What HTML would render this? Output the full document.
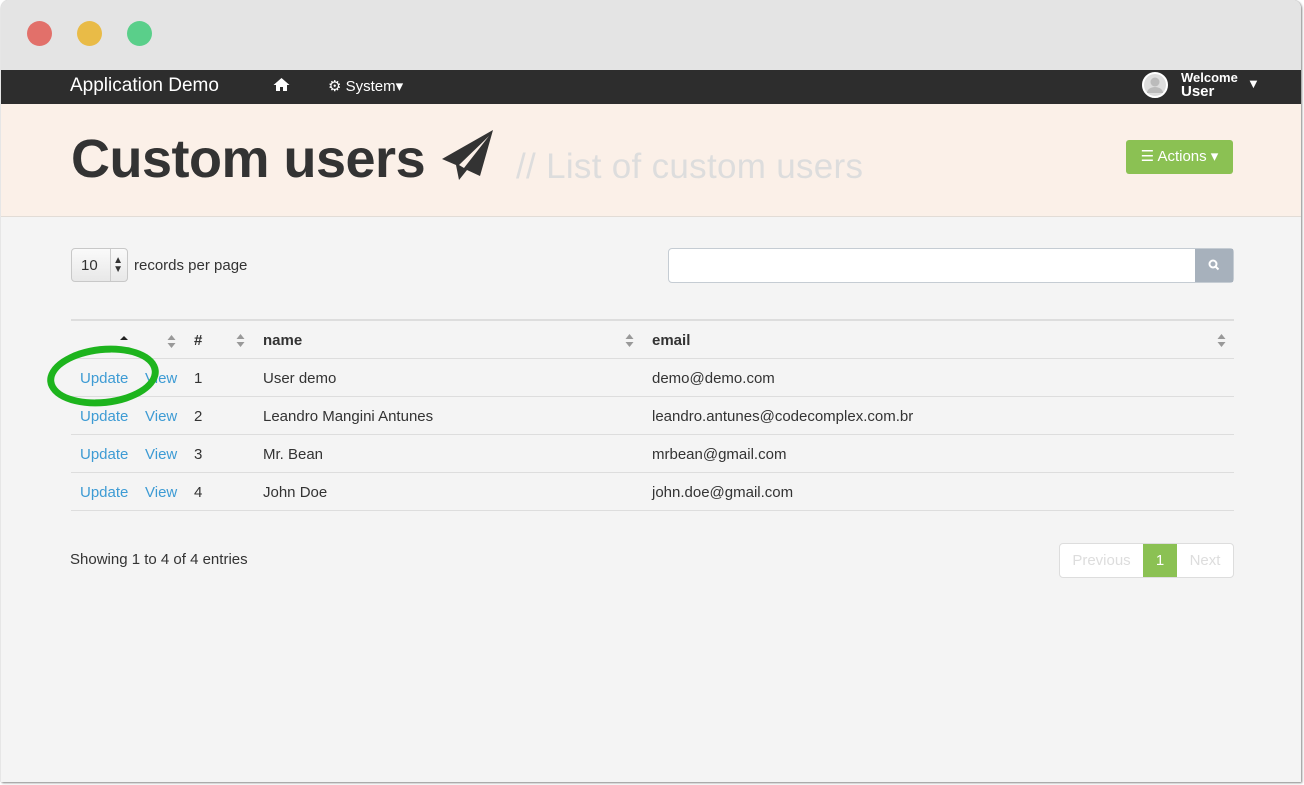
<!DOCTYPE html>
<html><head><meta charset="utf-8"><style>
*{box-sizing:border-box;margin:0;padding:0}
body{width:1304px;height:785px;background:#fff;font-family:"Liberation Sans",sans-serif;overflow:hidden;position:relative}
.win{position:absolute;left:1px;top:0;width:1300px;height:782px;background:#f4f4f4;border-radius:8px 8px 0 0;overflow:hidden;box-shadow:1px 1px 2px #888, 0 0 1px #999}
.title{height:70px;background:#e4e4e4;position:relative}
.dot{position:absolute;top:21px;width:25px;height:25px;border-radius:50%}
.nav{position:absolute;top:70px;left:0;width:1300px;height:34px;background:#2d2d2d;color:#fff}
.nav span{position:absolute;top:7px}
.head{position:absolute;top:104px;left:0;width:1300px;height:113px;background:#fbf0e8;border-bottom:1px solid #e2dcd6}
.t{position:absolute;left:70px;top:24px;font-size:54px;font-weight:bold;color:#333;letter-spacing:-0.5px}
.sub{position:absolute;left:515px;top:43px;font-size:35px;color:#ddd;letter-spacing:0.3px}
.btn{position:absolute;left:1125px;top:36px;width:107px;height:34px;background:#8bc153;border-radius:3px;color:#fff;font-size:15px;line-height:34px;text-align:center}
.sel{position:absolute;left:70px;top:248px;width:57px;height:34px;border:1px solid #c8c8c8;border-radius:4px;background:linear-gradient(#fafafa,#e8e8e8);font-size:15px;color:#333;padding:8px 0 0 9px}
.lbl{position:absolute;left:133px;top:257px;font-size:15px;color:#333}
.search{position:absolute;left:667px;top:248px;width:566px;height:35px;border:1px solid #c5ccd3;border-radius:4px;background:#fff}
.sb{position:absolute;right:0;top:0;width:38px;height:33px;background:#a7b1bc}
table{position:absolute;left:70px;top:319px;width:1163px;border-collapse:collapse;font-size:15px;color:#333}
td,th{height:38px;border-top:1px solid #ddd;text-align:left;vertical-align:middle;padding-top:2px}
thead th{border-top:2px solid #ddd;font-weight:bold}
tbody tr:last-child td{border-bottom:1px solid #ddd}
a{color:#3d9bd4;text-decoration:none}
.srt{float:right;margin-right:18px;margin-top:2px}
.last{margin-right:8px}
.pg{position:absolute;left:1058px;top:543px;height:35px;border:1px solid #ddd;border-radius:4px;background:#fff;display:flex;font-size:15px;color:#ddd;line-height:33px;overflow:hidden}
</style></head><body>
<div class="win">
<div class="title">
<div class="dot" style="left:26px;background:#e2706a"></div>
<div class="dot" style="left:76px;background:#e9bb47"></div>
<div class="dot" style="left:126px;background:#5acf8a"></div>
</div>
<div class="nav">
<span style="left:69px;font-size:19px;top:5px">Application Demo</span>
<span style="left:272px;font-size:16px">
<svg width="17" height="15" viewBox="0 0 17 15"><path d="M8.5 1L0.5 8h2.5v6h4v-4h3v4h4V8h2.5z" fill="#fff"/></svg></span>
<span style="left:327px;font-size:15px;top:7px">⚙ System▾</span>
<span style="left:1141px;top:2px"><svg width="26" height="26"><circle cx="13" cy="13" r="12" fill="#ddd" stroke="#fff" stroke-width="2"/><circle cx="13" cy="10" r="4.5" fill="#bbb"/><path d="M5 21a8 6 0 0 1 16 0" fill="#bbb"/></svg></span>
<span style="left:1180px;top:1px;font-size:13px;font-weight:bold;line-height:14px">Welcome<br><span style="position:static;font-size:15px">User</span></span>
<span style="left:1246px;top:6px;font-size:13px">▼</span>
</div>
<div class="head">
<div class="t">Custom users <svg width="56" height="52" viewBox="0 0 56 52" style="vertical-align:-4px"><path d="M53 1L2 30l14 6 3 15 8-10 13 6z M19 36l30-29-25 32z" fill="#333" fill-rule="evenodd"/></svg></div>
<div class="sub">// List of custom users</div>
<div class="btn">☰ Actions ▾</div>
</div>
<div class="sel">10<span style="position:absolute;right:4px;top:7px;font-size:10px;line-height:9px">▲<br>▼</span><span style="position:absolute;left:38px;top:0;bottom:0;border-left:1px solid #ccc"></span></div>
<div class="lbl">records per page</div>
<div class="search"><div class="sb"><svg width="38" height="33"><circle cx="18" cy="15" r="3.5" stroke="#fff" stroke-width="2" fill="none"/><path d="M20.5 17.5l3 3" stroke="#fff" stroke-width="2"/></svg></div></div>
<table>
<thead><tr><th style="width:66px"><svg width="66" height="10"><path d="M53 1l4 4h-8z" fill="#222"/></svg></th><th style="width:57px"><svg class="srt" width="9" height="13"><path d="M4.5 0l4 5h-8zM4.5 13l4-5h-8z" fill="#999"/></svg></th><th style="width:69px">#<svg class="srt" width="9" height="13"><path d="M4.5 0l4 5h-8zM4.5 13l4-5h-8z" fill="#999"/></svg></th><th style="width:389px">name<svg class="srt" width="9" height="13"><path d="M4.5 0l4 5h-8zM4.5 13l4-5h-8z" fill="#999"/></svg></th><th>email<svg class="srt last" width="9" height="13"><path d="M4.5 0l4 5h-8zM4.5 13l4-5h-8z" fill="#999"/></svg></th></tr></thead>
<tbody>
<tr><td style="padding-left:9px"><a>Update</a></td><td style="padding-left:8px"><a>View</a></td><td>1</td><td>User demo</td><td>demo@demo.com</td></tr>
<tr><td style="padding-left:9px"><a>Update</a></td><td style="padding-left:8px"><a>View</a></td><td>2</td><td>Leandro Mangini Antunes</td><td>leandro.antunes@codecomplex.com.br</td></tr>
<tr><td style="padding-left:9px"><a>Update</a></td><td style="padding-left:8px"><a>View</a></td><td>3</td><td>Mr. Bean</td><td>mrbean@gmail.com</td></tr>
<tr><td style="padding-left:9px"><a>Update</a></td><td style="padding-left:8px"><a>View</a></td><td>4</td><td>John Doe</td><td>john.doe@gmail.com</td></tr>
</tbody></table>
<div style="position:absolute;left:46px;top:346px;width:112px;height:60px;border:7px solid #1db41d;border-radius:50%;transform:rotate(-6deg)"></div>
<div style="position:absolute;left:69px;top:551px;font-size:15px;color:#333">Showing 1 to 4 of 4 entries</div>
<div class="pg"><div style="width:83px;text-align:center">Previous</div><div style="width:34px;text-align:center;background:#8bc153;color:#fff">1</div><div style="width:56px;text-align:center">Next</div></div>
</div>
</body></html>
